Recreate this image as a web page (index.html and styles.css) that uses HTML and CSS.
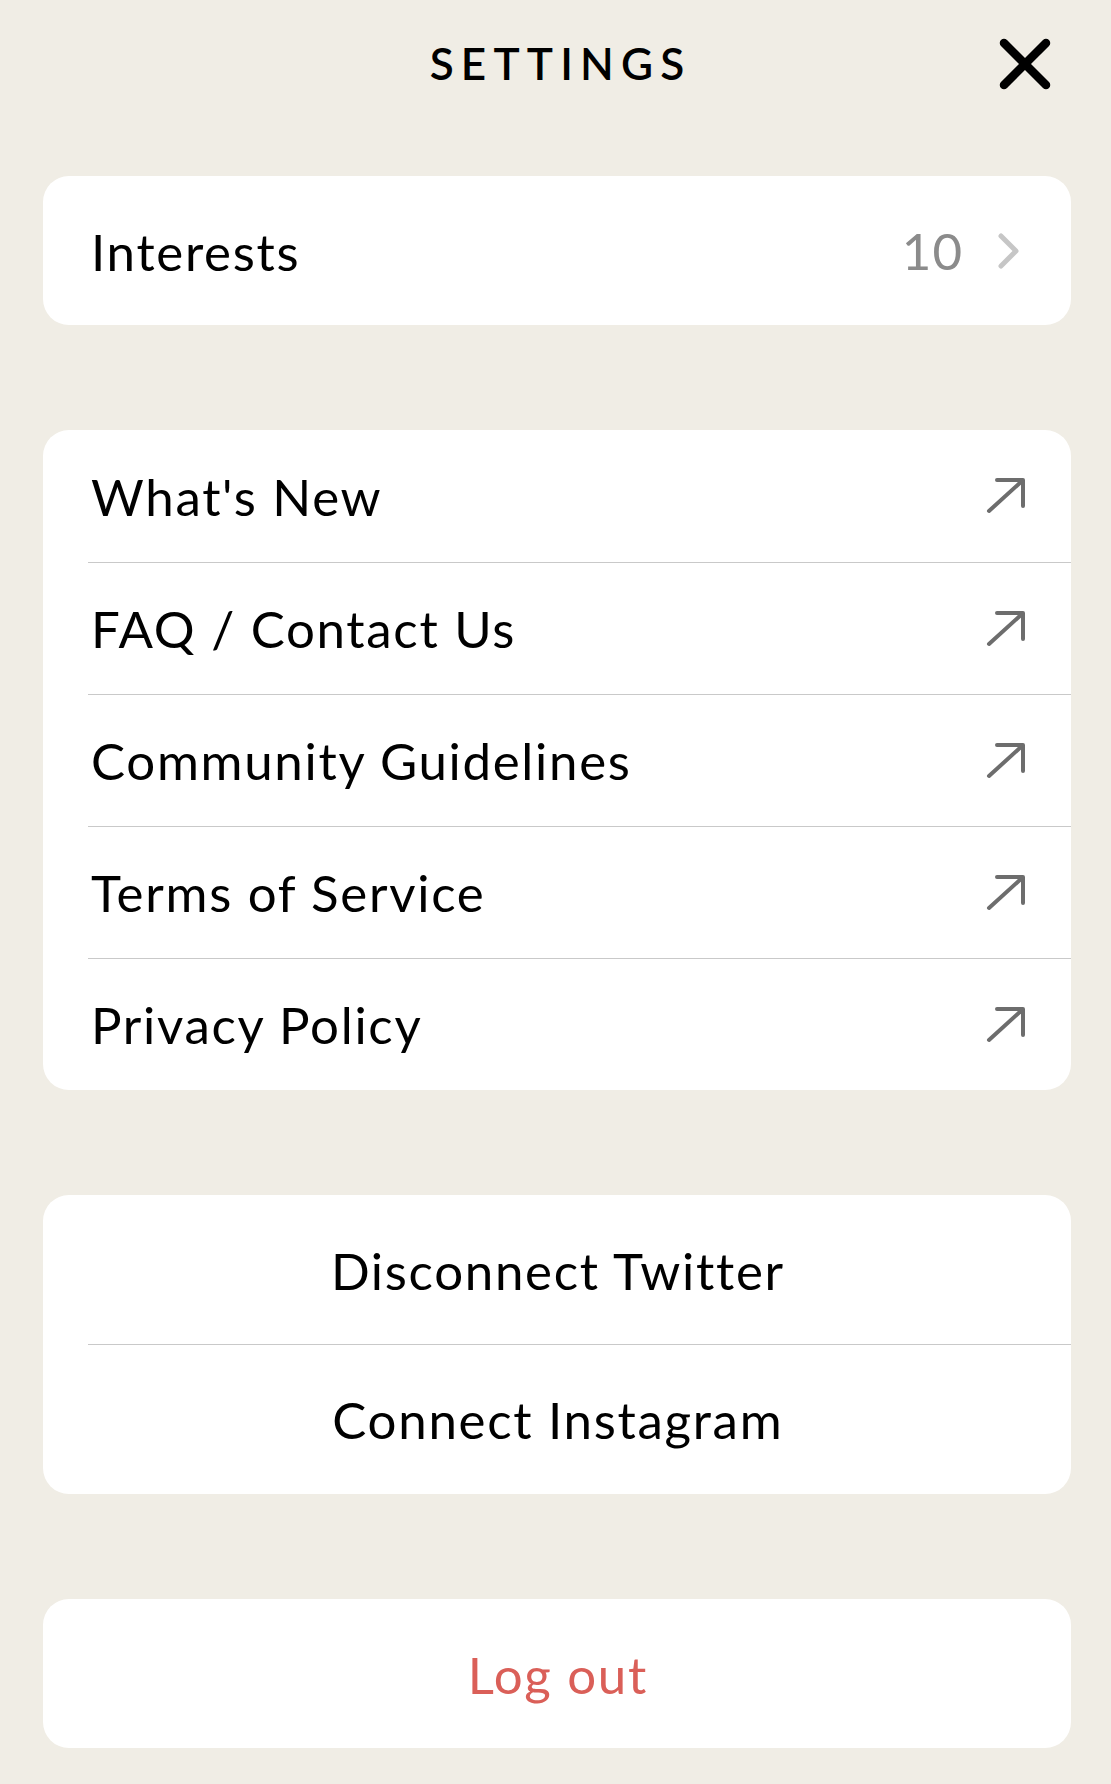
FILE: index.html
```html
<!DOCTYPE html>
<html lang="en">
<head>
<meta charset="utf-8">
<title>Settings</title>
<link rel="stylesheet" href="styles.css">
</head>
<body>
<div class="page">
  <header class="header">
    <span class="spacer"></span>
    <h1 class="title">SETTINGS</h1>
    <button class="close" aria-label="Close">
      <svg width="52" height="52" viewBox="0 0 52 52"><path d="M5 5 L47 47 M47 5 L5 47" stroke="#000" stroke-width="8.5" stroke-linecap="round" fill="none"/></svg>
    </button>
  </header>

  <section class="card">
    <div class="row row-tall">
      <span class="label">Interests</span>
      <span class="meta">
        <span class="count">10</span>
        <svg class="chev" width="26" height="40" viewBox="0 0 26 40"><path d="M5 5 L20 20 L5 35" stroke="#c6c6c6" stroke-width="5" stroke-linecap="round" stroke-linejoin="round" fill="none"/></svg>
      </span>
    </div>
  </section>

  <section class="card">
    <div class="row row-link"><span class="label">What's New</span><svg class="arrow" width="40" height="40" viewBox="0 0 40 40"><path d="M3 35 L36 5 M11 4 H37 V30" stroke="#6d6d6d" stroke-width="4" stroke-linecap="round" stroke-linejoin="round" fill="none"/></svg></div>
    <div class="row row-link"><span class="label">FAQ / Contact Us</span><svg class="arrow" width="40" height="40" viewBox="0 0 40 40"><path d="M3 35 L36 5 M11 4 H37 V30" stroke="#6d6d6d" stroke-width="4" stroke-linecap="round" stroke-linejoin="round" fill="none"/></svg></div>
    <div class="row row-link"><span class="label">Community Guidelines</span><svg class="arrow" width="40" height="40" viewBox="0 0 40 40"><path d="M3 35 L36 5 M11 4 H37 V30" stroke="#6d6d6d" stroke-width="4" stroke-linecap="round" stroke-linejoin="round" fill="none"/></svg></div>
    <div class="row row-link"><span class="label">Terms of Service</span><svg class="arrow" width="40" height="40" viewBox="0 0 40 40"><path d="M3 35 L36 5 M11 4 H37 V30" stroke="#6d6d6d" stroke-width="4" stroke-linecap="round" stroke-linejoin="round" fill="none"/></svg></div>
    <div class="row row-link"><span class="label">Privacy Policy</span><svg class="arrow" width="40" height="40" viewBox="0 0 40 40"><path d="M3 35 L36 5 M11 4 H37 V30" stroke="#6d6d6d" stroke-width="4" stroke-linecap="round" stroke-linejoin="round" fill="none"/></svg></div>
  </section>

  <section class="card">
    <div class="row row-tall row-center"><span class="label">Disconnect Twitter</span></div>
    <div class="row row-tall row-center"><span class="label">Connect Instagram</span></div>
  </section>

  <section class="card">
    <div class="row row-tall row-center"><span class="label danger">Log out</span></div>
  </section>
</div>
</body>
</html>
```

FILE: styles.css
```css
* { box-sizing: border-box; }
html, body {
  margin: 0;
  padding: 0;
  background: #f0ede5;
}
body {
  font-family: Lato, "Noto Sans", "Liberation Sans", sans-serif;
  color: #000;
}
.page {
  display: flex;
  flex-direction: column;
  gap: 105px;
  padding: 0 40px 40px 43px;
}
.header {
  display: grid;
  grid-template-columns: 1fr auto 1fr;
  align-items: center;
  height: 128px;
  margin-bottom: -57px;
}
.title {
  margin: 0;
  font-size: 44px;
  font-weight: 600;
  letter-spacing: 7.2px;
  margin-right: -7.2px;
  line-height: 1;
  margin-top: -3px;
}
.close {
  justify-self: end;
  margin-right: 20px;
  background: none;
  border: 0;
  padding: 0;
  display: flex;
  cursor: pointer;
}
.card {
  background: #fff;
  border-radius: 26px;
  overflow: hidden;
}
.row {
  display: flex;
  align-items: center;
  justify-content: space-between;
  margin-left: 45px;
  padding-right: 46px;
  border-top: 1px solid #c9c9c9;
}
.row:first-child { border-top: 0; }
.row-tall { height: 150px; }
.row:first-child.row-tall { height: 149px; }
.row-link { height: 132px; }
.row-center {
  justify-content: center;
  padding-right: 45px;
}
.label {
  font-size: 51px;
  line-height: 1;
  letter-spacing: 1.7px;
  color: #000;
  padding-left: 3px;
}
.row-center .label { padding-left: 0; margin-right: -1.7px; }
.row-tall:first-child .label { padding-top: 1px; }
.meta {
  display: flex;
  align-items: center;
  gap: 33px;
  margin-right: 3px;
}
.count {
  font-size: 51px;
  color: #8b8b8b;
  line-height: 1;
  letter-spacing: 1px;
}
.chev { display: block; }
.arrow { display: block; margin-right: -1px; }
.danger { color: #da5f58; }
```
